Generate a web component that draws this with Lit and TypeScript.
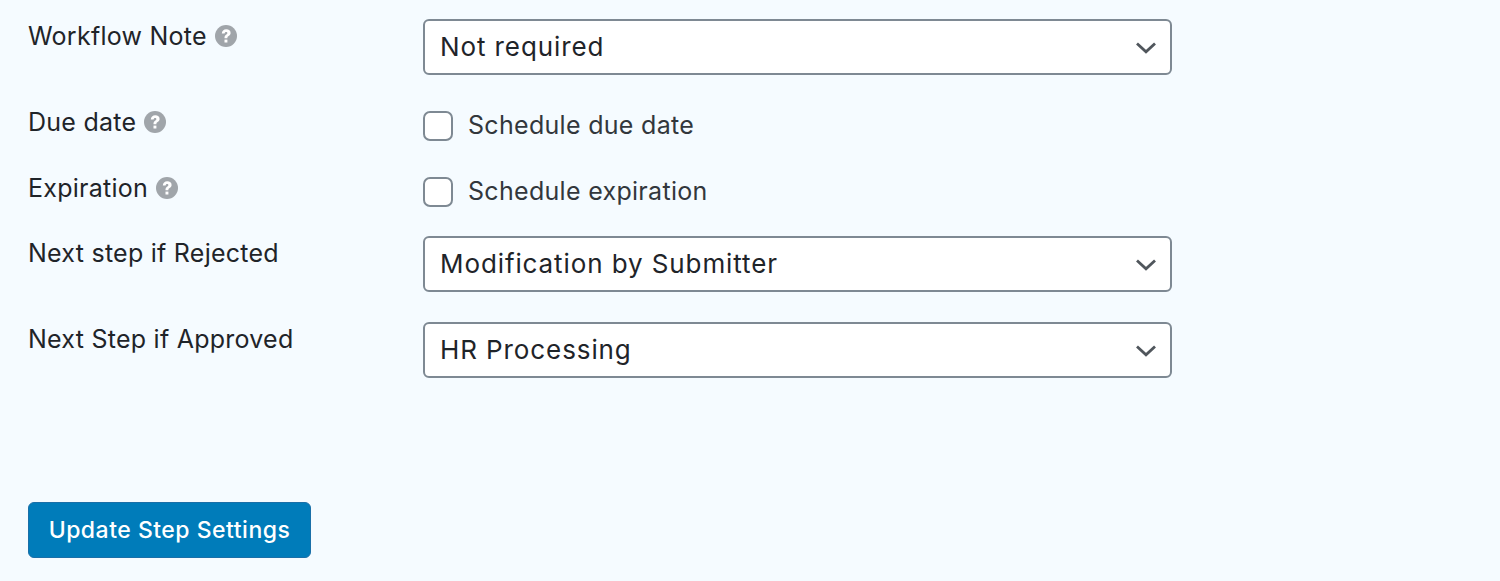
import { LitElement, html, css } from "lit";
import { customElement } from "lit/decorators.js";

const help = html`<svg class="help" viewBox="0 0 22 22" width="22" height="22" aria-hidden="true">
    <circle cx="11" cy="11" r="11" fill="#a0a5aa"></circle>
    <path d="M6.800 8.500C6.900 5.900 8.700 4.300 11.300 4.300c2.500 0 4.300 1.400 4.300 3.600 0 1.500-.8 2.300-2 3.100-.9.600-1.200 1-1.200 1.900v.4H9.500v-.6c0-1.500.6-2.300 1.600-3 .9-.6 1.300-1 1.300-1.600 0-.7-.5-1.200-1.300-1.200-.9 0-1.400.6-1.500 1.600z" fill="#fff"></path>
    <rect x="9.500" y="14.600" width="2.900" height="2.900" fill="#fff"></rect>
</svg>`;

const chevron = html`<svg class="chevron" viewBox="0 0 20 12" width="20" height="12" aria-hidden="true">
    <path d="M1 1.500 10 9.800l9-8.300" fill="none" stroke="#50565c" stroke-width="2.800"></path>
</svg>`;

@customElement("app-root")
export class AppRoot extends LitElement {
    static styles = css`
        :host {
            display: block;
            height: 581px;
            box-sizing: border-box;
            padding: 19px 0 0 28px;
            background: #f5fbff;
            font-family: Inter, "Liberation Sans", sans-serif;
            font-size: 25px;
            color: #1f2429;
            overflow: hidden;
        }
        .row {
            display: grid;
            grid-template-columns: 395px 749px;
            margin-bottom: 30px;
        }
        .row.check {
            height: 36px;
        }
        .row.tight {
            margin-bottom: 29px;
        }
        .label {
            display: flex;
            align-items: center;
            gap: 8px;
            height: 34px;
            line-height: 34px;
            letter-spacing: 0.25px;
        }
        .help {
            flex: none;
        }
        .select {
            box-sizing: border-box;
            height: 56px;
            display: flex;
            align-items: center;
            justify-content: space-between;
            padding: 0 14px 2px 15px;
            background: #fff;
            border: 2px solid #7e8993;
            border-radius: 6px;
            color: #1f2429;
            font-size: 26px;
            letter-spacing: 0.9px;
        }
        .chevron {
            margin-top: 4px;
        }
        .checkline {
            display: flex;
            align-items: center;
            gap: 15px;
            height: 30px;
            margin-top: 6px;
            color: #32373c;
            letter-spacing: 0.3px;
        }
        .checkline span:last-child {
            margin-bottom: 2px;
        }
        .box {
            box-sizing: border-box;
            width: 30px;
            height: 30px;
            background: #fff;
            border: 2px solid #7e8993;
            border-radius: 7px;
        }
        .actions {
            margin-top: 124px;
        }
        button {
            box-sizing: border-box;
            width: 283px;
            height: 56px;
            padding: 0;
            background: #007cba;
            border: 1px solid #1a6fa8;
            border-radius: 6px;
            color: #fff;
            font: 500 23px Inter, "Liberation Sans", sans-serif;
            letter-spacing: 0.5px;
        }
    `;

    render() {
        return html`
            <div class="row">
                <div class="label">Workflow Note ${help}</div>
                <div class="select">Not required ${chevron}</div>
            </div>
            <div class="row check">
                <div class="label">Due date ${help}</div>
                <label class="checkline"><span class="box"></span><span>Schedule due date</span></label>
            </div>
            <div class="row check tight">
                <div class="label">Expiration ${help}</div>
                <label class="checkline"><span class="box"></span><span>Schedule expiration</span></label>
            </div>
            <div class="row">
                <div class="label">Next step if Rejected</div>
                <div class="select">Modification by Submitter ${chevron}</div>
            </div>
            <div class="row">
                <div class="label">Next Step if Approved</div>
                <div class="select">HR Processing ${chevron}</div>
            </div>
            <div class="actions">
                <button>Update Step Settings</button>
            </div>
        `;
    }
}

declare global {
    interface HTMLElementTagNameMap {
        "app-root": AppRoot;
    }
}
